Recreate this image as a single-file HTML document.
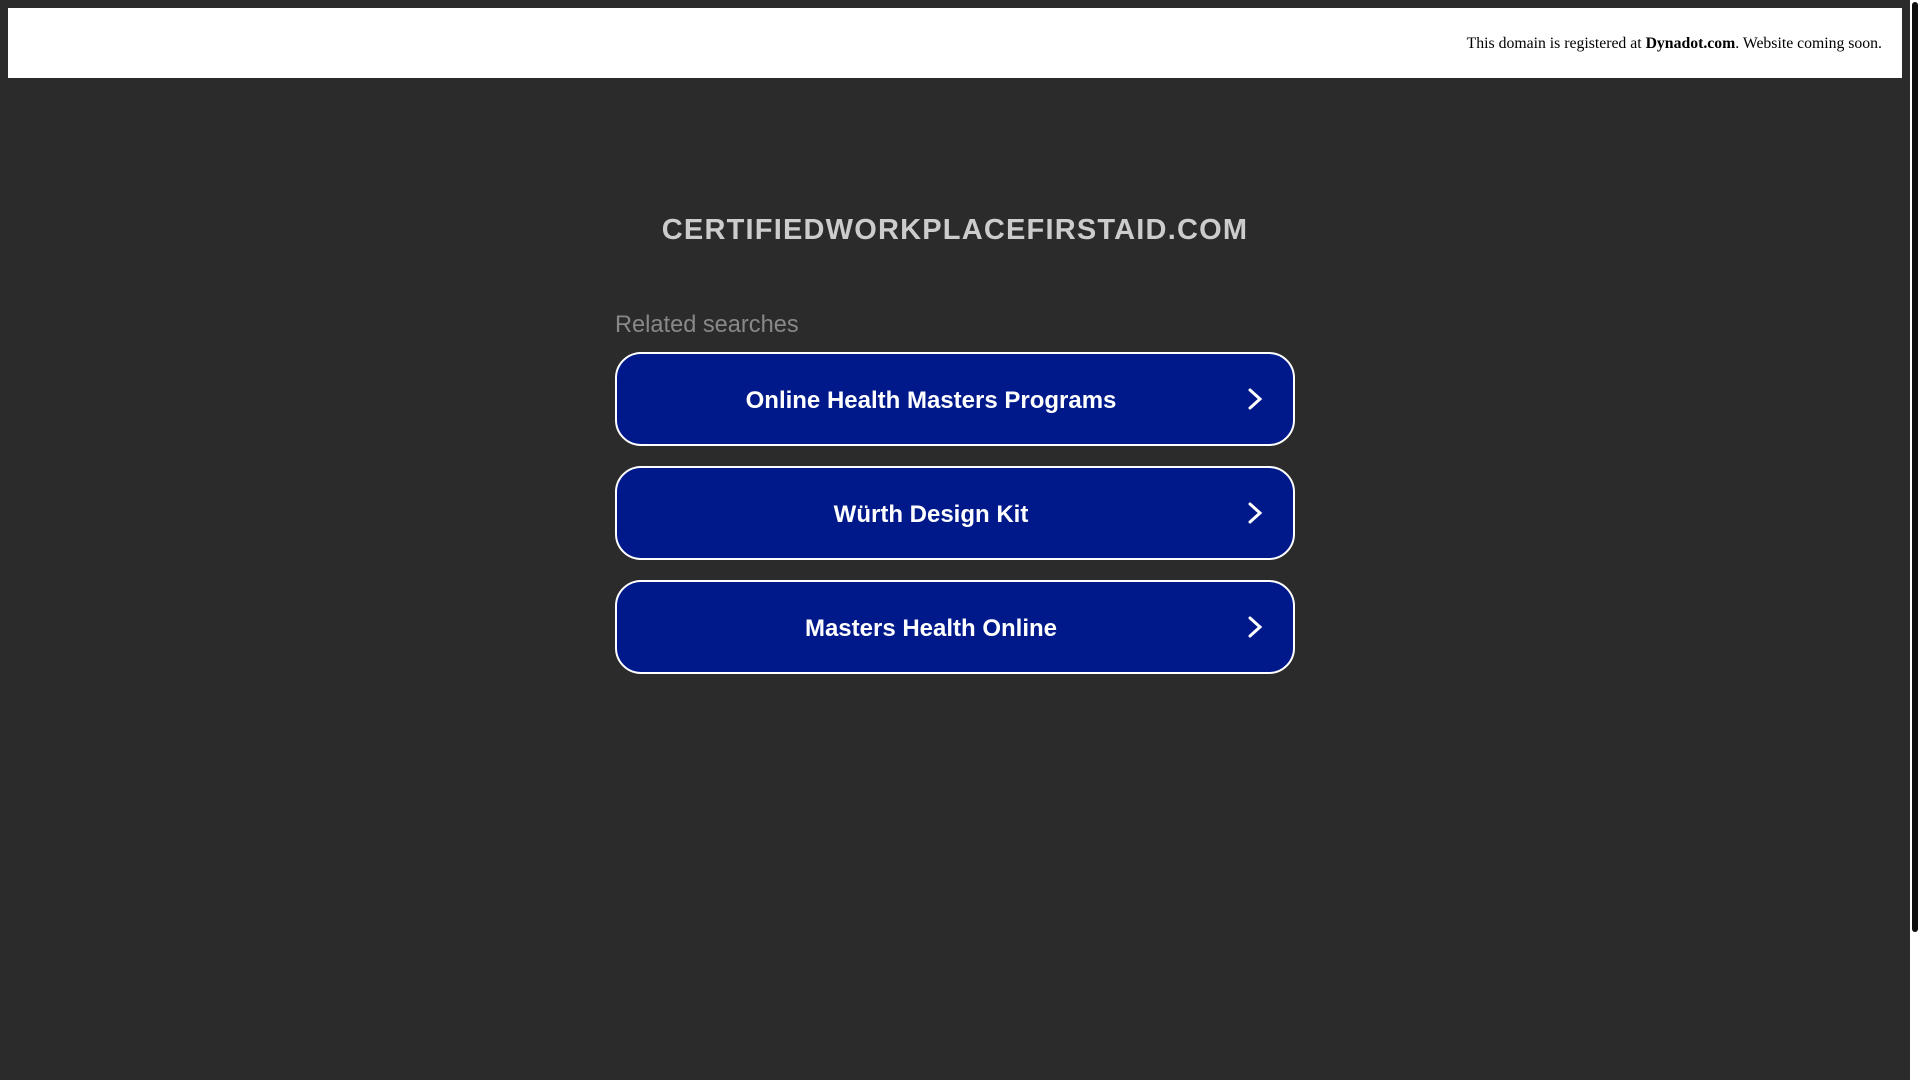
<!DOCTYPE html>
<html lang="en">
<head>
<meta charset="utf-8">
<title>certifiedworkplacefirstaid.com</title>
<style>
html,body{margin:0;padding:0;width:1920px;height:1080px;overflow:hidden;background:#2b2b2b}
body{position:relative;font-family:"Liberation Sans",Arial,sans-serif}
.hdr{position:absolute;left:8px;top:8px;width:1894px;height:70px;background:#fff}
.hdr p{position:absolute;right:20px;top:1px;margin:0;font:15.75px/69px "Liberation Serif",serif;color:#000;white-space:nowrap}
.title{position:absolute;left:0;top:210px;width:1910px;text-align:center;font-weight:700;font-size:29px;line-height:40px;letter-spacing:1.2px;color:#ccc;white-space:nowrap}
.rel{position:absolute;left:615px;top:309px;font-size:23.6px;line-height:32px;color:#888;white-space:nowrap}
.btn{position:absolute;left:615px;width:676px;height:90px;border:2px solid #fff;border-radius:26px;background:#00198a;color:#fff;text-decoration:none}
.btn span{position:absolute;left:0;top:0;width:628px;text-align:center;font-weight:700;font-size:24px;line-height:93px;white-space:nowrap}
.btn svg{position:absolute;left:627px;top:32.5px;width:22px;height:24px}
.track{position:absolute;left:1910px;top:0;width:10px;height:1080px;background:#fff}
.thumb{position:absolute;left:2px;top:2px;width:6px;height:930px;background:#0e0e0e;border-radius:3px}
</style>
</head>
<body>
<div class="hdr"><p>This domain is registered at <b>Dynadot.com</b>. Website coming soon.</p></div>
<div class="title">CERTIFIEDWORKPLACEFIRSTAID.COM</div>
<div class="rel">Related searches</div>
<a class="btn" style="top:352px"><span>Online Health Masters Programs</span><svg viewBox="0 0 22 24"><path d="M6 3 L16 12 L6 21" fill="none" stroke="#fff" stroke-width="3" stroke-linecap="round" stroke-linejoin="miter"/></svg></a>
<a class="btn" style="top:466px"><span>Würth Design Kit</span><svg viewBox="0 0 22 24"><path d="M6 3 L16 12 L6 21" fill="none" stroke="#fff" stroke-width="3" stroke-linecap="round" stroke-linejoin="miter"/></svg></a>
<a class="btn" style="top:580px"><span>Masters Health Online</span><svg viewBox="0 0 22 24"><path d="M6 3 L16 12 L6 21" fill="none" stroke="#fff" stroke-width="3" stroke-linecap="round" stroke-linejoin="miter"/></svg></a>
<div class="track"><div class="thumb"></div></div>
</body>
</html>
